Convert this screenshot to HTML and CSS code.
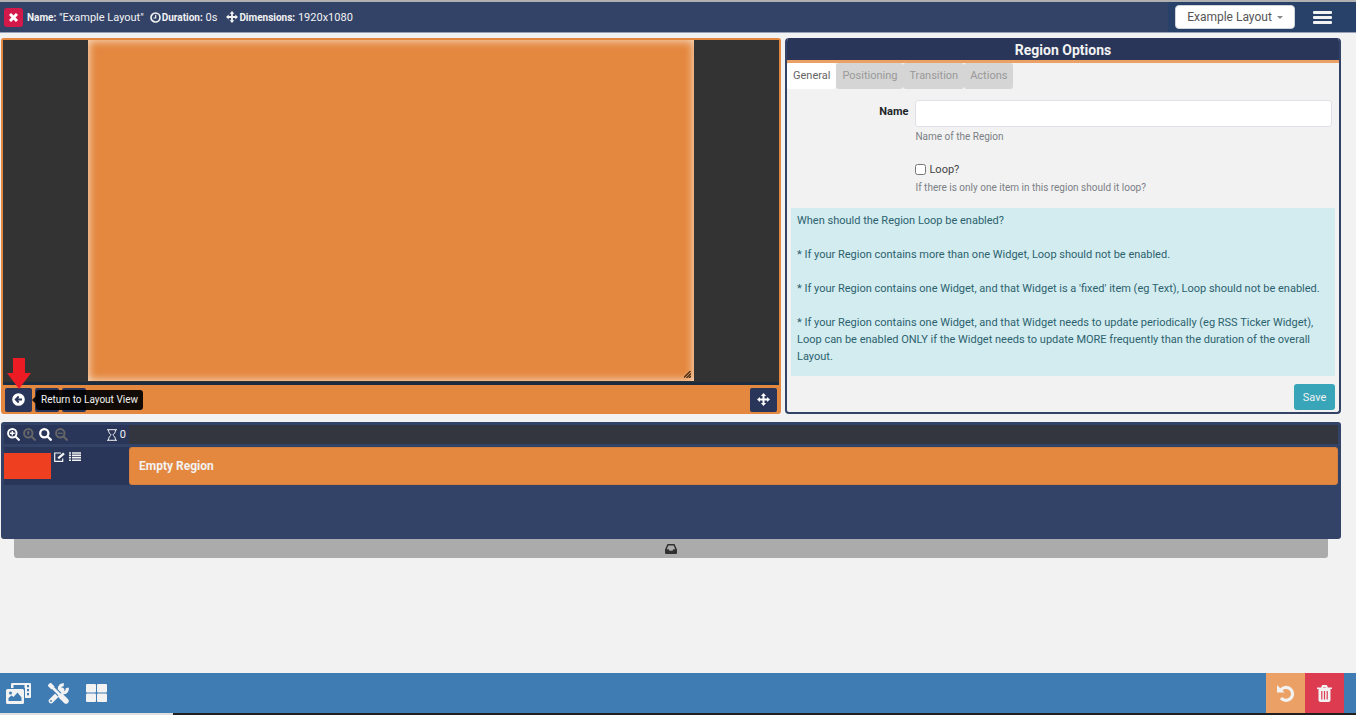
FILE: index.html
```html
<!DOCTYPE html>
<html lang="en">
<head>
    <meta charset="UTF-8">
    <meta name="viewport" content="width=device-width, initial-scale=1.0">
    <title>Layout Editor</title>
    <link rel="stylesheet" href="styles.css">
</head>
<body>
    <header class="topbar">
        <button class="close-btn" aria-label="Close"><svg width="9" height="9" viewBox="0 0 9 9"><path d="M1 1l7 7M8 1l-7 7" stroke="#fff" stroke-width="3"/></svg></button>
        <div class="info">
            <span><b>Name:</b> "Example Layout"</span>
            <span class="duration"><svg width="11" height="11" viewBox="0 0 11 11" fill="none" stroke="#f2f2f2" stroke-width="1.700"><circle cx="5.500" cy="5.500" r="4.500"/><path d="M5.700 2.800v3.200H3.500" stroke-width="1.200"/></svg><b>Duration:</b> 0s</span>
            <span class="dimensions"><svg width="12" height="12" viewBox="0 0 12 12" fill="#f2f2f2"><path d="M6 0l2.400 2.700H6.900v2.400h2.400V3.600L12 6 9.300 8.400V6.900H6.900v2.400h1.500L6 12 3.600 9.300h1.500V6.900H2.700v1.500L0 6l2.700-2.400v1.500h2.400V2.700H3.600z"/></svg><b>Dimensions:</b> 1920x1080</span>
        </div>
        <div class="topbar-right">
            <button class="layout-select">Example Layout <i class="caret"></i></button>
            <button class="menu-btn" aria-label="Menu"><i></i><i></i><i></i></button>
        </div>
    </header>

    <main class="editor">
        <div class="panels">
            <section class="viewer">
                <div class="stage">
                    <div class="region"><svg class="grip" width="7" height="7" viewBox="0 0 7 7"><path d="M0 6.500L6.500 0M2.500 7L7 2.500M5 7l2-2" stroke="#4a3018" stroke-width="1.400"/></svg></div>
                </div>
                <div class="viewer-bar">
                    <button class="tool-btn back-btn" aria-label="Return to Layout View">
                        <svg width="13" height="13" viewBox="0 0 13 13"><circle cx="6.500" cy="6.500" r="6.300" fill="#fff"/><path d="M10 6.500H4M6.700 3.500l-3 3 3 3" fill="none" stroke="#29365a" stroke-width="1.800"/></svg>
                    </button>
                    <button class="tool-btn small" aria-label="Add"></button>
                    <button class="tool-btn small" aria-label="Delete"></button>
                    <button class="tool-btn move-btn" aria-label="Move">
                        <svg width="13" height="13" viewBox="0 0 12 12" fill="#fff"><path d="M6 0l2.400 2.700H6.900v2.400h2.400V3.600L12 6 9.300 8.400V6.900H6.900v2.400h1.500L6 12 3.600 9.300h1.500V6.900H2.700v1.500L0 6l2.700-2.400v1.500h2.400V2.700H3.600z"/></svg>
                    </button>
                    <svg class="arrow" width="24" height="31" viewBox="0 0 24 31"><path d="M6 0h12v15h6L12 31 0 15h6z" fill="#ed1c24"/></svg>
                    <div class="tooltip">Return to Layout View</div>
                </div>
            </section>

            <section class="options">
                <h2>Region Options</h2>
                <nav class="tabs">
                    <a href="#" class="active">General</a>
                    <a href="#">Positioning</a>
                    <a href="#">Transition</a>
                    <a href="#">Actions</a>
                </nav>
                <form class="options-form">
                    <div class="field">
                        <label for="name" class="field-label">Name</label>
                        <div class="field-body">
                            <input type="text" id="name">
                            <p class="help">Name of the Region</p>
                        </div>
                    </div>
                    <div class="field">
                        <div class="field-body loop">
                            <label class="check" for="loop"><input type="checkbox" id="loop">Loop?</label>
                            <p class="help">If there is only one item in this region should it loop?</p>
                        </div>
                    </div>
                    <div class="alert">
                        <p>When should the Region Loop be enabled?</p>
                        <p>* If your Region contains more than one Widget, Loop should not be enabled.</p>
                        <p>* If your Region contains one Widget, and that Widget is a 'fixed' item (eg Text), Loop should not be enabled.</p>
                        <p>* If your Region contains one Widget, and that Widget needs to update periodically (eg RSS Ticker Widget), Loop can be enabled ONLY if the Widget needs to update MORE frequently than the duration of the overall Layout.</p>
                    </div>
                    <button type="button" class="save-btn">Save</button>
                </form>
            </section>
        </div>

        <section class="timeline">
            <div class="row ruler">
                <div class="row-head controls">
                    <button aria-label="Zoom in"><svg width="13" height="13" viewBox="0 0 13 13" fill="none" stroke="#fff" stroke-width="2"><circle cx="5.300" cy="5.300" r="4.200"/><path d="M8.500 8.500l4 4"/><path d="M5.300 3v4.600M3 5.300h4.600" stroke-width="1.400"/></svg></button>
                    <button aria-label="Zoom to region"><svg width="13" height="13" viewBox="0 0 13 13" fill="none" stroke="#666" stroke-width="2"><circle cx="5.300" cy="5.300" r="4.200"/><path d="M8.500 8.500l4 4"/><path d="M5.300 3v4M4 4.500h2.600" stroke-width="1.500"/></svg></button>
                    <button aria-label="Reset zoom"><svg width="13" height="13" viewBox="0 0 13 13" fill="none" stroke="#fff" stroke-width="2.300"><circle cx="5.300" cy="5.300" r="4.100"/><path d="M8.500 8.500l4 4"/></svg></button>
                    <button aria-label="Zoom out"><svg width="13" height="13" viewBox="0 0 13 13" fill="none" stroke="#666" stroke-width="2"><circle cx="5.300" cy="5.300" r="4.200"/><path d="M8.500 8.500l4 4"/><path d="M3 5.300h4.600" stroke-width="1.400"/></svg></button>
                    <span class="time"><svg width="10" height="12" viewBox="0 0 10 12" fill="none" stroke="#f2f2f2"><path d="M0 .7h10M0 11.300h10M1.500 1c0 3 1.500 3.700 2.700 5-1.200 1.300-2.700 2-2.700 5M8.500 1c0 3-1.500 3.700-2.700 5 1.200 1.300 2.700 2 2.700 5"/></svg>0</span>
                </div>
                <div class="ruler-track"></div>
            </div>
            <div class="row">
                <div class="row-head region-head">
                    <div class="thumb"></div>
                    <button aria-label="Edit"><svg width="12" height="10" viewBox="0 0 12 10" fill="none" stroke="#f2f2f2"><path d="M7 1H.7v8.300h8V6.500" stroke-width="1.200"/><path d="M4.200 6.300l5.800-5" stroke-width="2.400"/></svg></button>
                    <button aria-label="List"><svg width="12" height="9" viewBox="0 0 12 9" stroke="#f2f2f2" stroke-width="1.600"><path d="M0 1h2M3 1h9M0 3.400h2M3 3.400h9M0 5.800h2M3 5.800h9M0 8.200h2M3 8.200h9"/></svg></button>
                </div>
                <div class="region-track">Empty Region</div>
            </div>
        </section>
        <button class="drawer" aria-label="Drawer"><svg width="12" height="10" viewBox="0 0 12 10"><path fill-rule="evenodd" d="M2.500 0h7L12 5.500V9q0 1-1 1H1Q0 10 0 9V5.500zM3.400 1.400L1.700 5.200h2l.8 1.600h3l.8-1.600h2L8.600 1.400z" fill="#303030"/></svg></button>
    </main>

    <footer class="bottombar">
        <button aria-label="Library"><svg width="25" height="21" viewBox="0 0 25 21"><path d="M6 0h18q1 0 1 1v13q0 1-1 1h-5V5H5V1q0-1 1-1z" fill="#f2f2f2"/><path d="M7.500 2h11v3h-11zM21 2h2v2.200h-2zM21 6h2v2.200h-2zM21 10h2v2.200h-2z" fill="#407cb4"/><rect y="6" width="18" height="15" rx="1.500" fill="#f2f2f2"/><path d="M2.500 18v-3l3-2.500 2 1.500 4-4.500 4 5V18z" fill="#407cb4"/><circle cx="4.500" cy="10" r="1.500" fill="#407cb4"/></svg></button>
        <button aria-label="Tools"><svg width="21" height="21" viewBox="0 0 21 21" fill="none" stroke="#f2f2f2"><path d="M3 18L14 7" stroke-width="4.600" stroke-linecap="round"/><path d="M19.200 4.800A4 4 0 1 1 15.800 1.800" stroke-width="3.200"/><path d="M3 3l9 9" stroke="#407cb4" stroke-width="5"/><path d="M1 1l4 4" stroke-width="4.400"/><path d="M3 3l9 9" stroke-width="2.600"/><path d="M13 13l5 5" stroke-width="5.400" stroke-linecap="round"/><circle cx="3" cy="18" r=".9" fill="#407cb4" stroke="none"/></svg></button>
        <button aria-label="Widgets"><svg width="21" height="18" viewBox="0 0 21 18" fill="#f2f2f2"><rect width="10" height="8.500" rx="1"/><rect x="11" width="10" height="8.500" rx="1"/><rect y="9.500" width="10" height="8.500" rx="1"/><rect x="11" y="9.500" width="10" height="8.500" rx="1"/></svg></button>
        <div class="actions">
            <button class="undo" aria-label="Undo"><svg width="18" height="17" viewBox="0 0 18 17"><path d="M3.500 5.500A6.500 6.500 0 1 1 4 13" fill="none" stroke="#f2f2f2" stroke-width="3.200"/><path d="M0 0v7.500h7.500z" fill="#f2f2f2"/></svg></button>
            <button class="trash" aria-label="Delete"><svg width="15" height="17" viewBox="0 0 15 17"><path d="M4.800 3l1-2h3.400l1 2" stroke="#f2f2f2" stroke-width="1.800" fill="none"/><path d="M0 2.500h15V4h-1.500v11q0 2-2 2h-8q-2 0-2-2V4H0z" fill="#f2f2f2"/><path d="M4.800 6v8.500M7.500 6v8.500M10.200 6v8.500" stroke="#dd3c50" stroke-width="1.200"/></svg></button>
        </div>
    </footer>
    <div class="progress"><div class="progress-done"></div></div>
</body>
</html>
```
FILE: styles.css
```css
* { box-sizing: border-box; }
body { margin: 0; min-height: 100vh; display: flex; flex-direction: column; background: #f2f2f2; font-family: Roboto, "Open Sans", sans-serif; font-size: 11px; line-height: 17px; color: #212529; }
button { font: inherit; color: inherit; border: none; background: none; padding: 0; cursor: pointer; display: flex; align-items: center; justify-content: center; }
svg { display: block; flex: none; }
p, h2 { margin: 0; }

/* top bar */
.topbar { height: 33px; border-top: 2px solid #b0b0b0; border-bottom: 1px solid #98a1b8; background: #334368; display: flex; align-items: center; padding-left: 4px; color: #f2f2f2; }
.close-btn { width: 19px; height: 19px; border-radius: 3px; background: #d3194a; }
.info { display: flex; margin-left: 4px; }
.info span { display: flex; align-items: center; white-space: pre; }
.info b { font-size: 10px; }
.duration { margin-left: 6px; }
.dimensions { margin-left: 9px; }
.info svg { margin-right: 1px; }
.topbar-right { margin-left: auto; height: 100%; width: 188px; padding: 0 24px 0 7px; display: flex; align-items: center; justify-content: space-between; background: #284168; }
.layout-select { width: 120px; height: 24px; border: 1px solid #d0d4da; border-radius: 4px; background: #fff; color: #555; font-size: 12px; gap: 5px; }
.caret { border: 3px solid transparent; border-top-color: #888; border-bottom: 0; }
.menu-btn { flex-direction: column; gap: 2px; width: 19px; }
.menu-btn i { width: 19px; height: 3px; background: #f2f2f2; border-radius: 1px; }

/* editor */
.editor { flex: 1; padding: 5px 15px 0 1px; }
.panels { display: grid; grid-template-columns: 780fr 556fr; gap: 4px; }
.viewer { display: flex; flex-direction: column; border: 2px solid #e4873f; border-bottom: none; border-radius: 3px; background: #e4873f; }
.stage { flex: 1; display: flex; justify-content: center; background: #333; border-bottom: 3px solid #1d2d40; }
.region { position: relative; height: 341px; aspect-ratio: 16 / 9; background: #e4873f; box-shadow: inset 0 0 8px 1px #f8dcc0; }
.grip { position: absolute; right: 3px; bottom: 3px; }
.viewer-bar { position: relative; height: 29px; display: flex; align-items: center; gap: 3px; padding: 0 2px; }
.tool-btn { width: 27px; height: 24px; border-radius: 2px; background: #29365a; }
.tool-btn.small { width: 24px; }
.move-btn { margin-left: auto; }
.arrow { position: absolute; left: 4px; top: -27px; }
.tooltip { position: absolute; left: 33px; top: 5px; height: 20px; padding: 0 5px; border-radius: 3px; background: rgba(0, 0, 0, 0.92); color: #f2f2f2; font-size: 10px; line-height: 20px; }
.tooltip::before { content: ""; position: absolute; left: -4px; top: 6px; border: 4px solid transparent; border-right-color: #0d0d0d; border-left: 0; }

/* region options */
.options { border: 2px solid #334368; border-top: none; border-radius: 4px; overflow: hidden; }
.options h2 { height: 25px; line-height: 25px; background: #29365a; border-bottom: 3px solid #eba165; text-align: center; color: #f2f2f2; font-size: 14px; }
.tabs { display: flex; }
.tabs a { height: 26px; line-height: 26px; padding: 0 6px; background: #d5d5d5; border-radius: 3px; color: #999; text-decoration: none; }
.tabs a.active { background: #fff; color: #666; }
.options-form { display: flex; flex-direction: column; padding: 11px 4px 2px; }
.field { display: flex; justify-content: flex-end; padding-right: 3px; }
.field-label { flex: 1; text-align: right; padding-right: 7px; font-weight: bold; line-height: 24px; }
.field-body { width: 77%; }
.field-body input[type="text"] { display: block; width: 100%; height: 27px; border: 1px solid #dee2e6; border-radius: 3px; background: #fff; padding: 0 8px; font: inherit; }
.help { margin-top: 2px; color: #7b8086; font-size: 10px; line-height: 16px; }
.loop { margin-top: 16px; }
.check { display: flex; align-items: center; gap: 3px; color: #444; }
.check input { width: 11px; height: 11px; margin: 0; }
.alert { margin-top: 12px; padding: 4px 6px 11px; background: #d3ecf0; color: #2c626e; }
.alert p + p { margin-top: 17px; }
.save-btn { align-self: flex-end; width: 41px; height: 26px; margin-top: 8px; border-radius: 3px; background: #38a5b8; color: #f2f2f2; }

/* timeline */
.timeline { margin-top: 8px; height: 117px; padding: 3px; border-radius: 3px; background: #334368; }
.row { display: flex; height: 38px; }
.row-head { width: 125px; background: #29365a; display: flex; color: #f2f2f2; }
.ruler { height: 19px; margin-bottom: 3px; }
.controls { align-items: center; gap: 3px; padding-left: 3px; }
.time { display: flex; align-items: center; gap: 3px; margin-left: auto; padding-right: 3px; }
.ruler-track { flex: 1; background: #33363f; }
.region-head { gap: 3px; align-items: flex-start; }
.region-head button { margin-top: 5px; }
.thumb { width: 47px; height: 26px; margin-top: 6px; background: #ee3f20; }
.region-track { flex: 1; padding-left: 9px; border: 1px solid #d5803f; border-radius: 3px; background: #e4873f; color: #f2f2f2; font-size: 12px; font-weight: bold; line-height: 36px; }
.drawer { width: calc(100% - 26px); height: 19px; margin: 0 13px; border-radius: 0 0 3px 3px; background: #ababab; }

/* bottom bar */
.bottombar { display: flex; align-items: center; height: 40px; padding: 0 12px 0 6px; background: #407cb4; gap: 17px; }
.actions { display: flex; align-self: stretch; margin-left: auto; }
.actions button { width: 39px; }
.undo { background: #eba165; }
.trash { background: #dd3c50; }
.progress { height: 2px; background: #202020; }
.progress-done { width: 173px; height: 2px; background: #e0e0e0; }
```
